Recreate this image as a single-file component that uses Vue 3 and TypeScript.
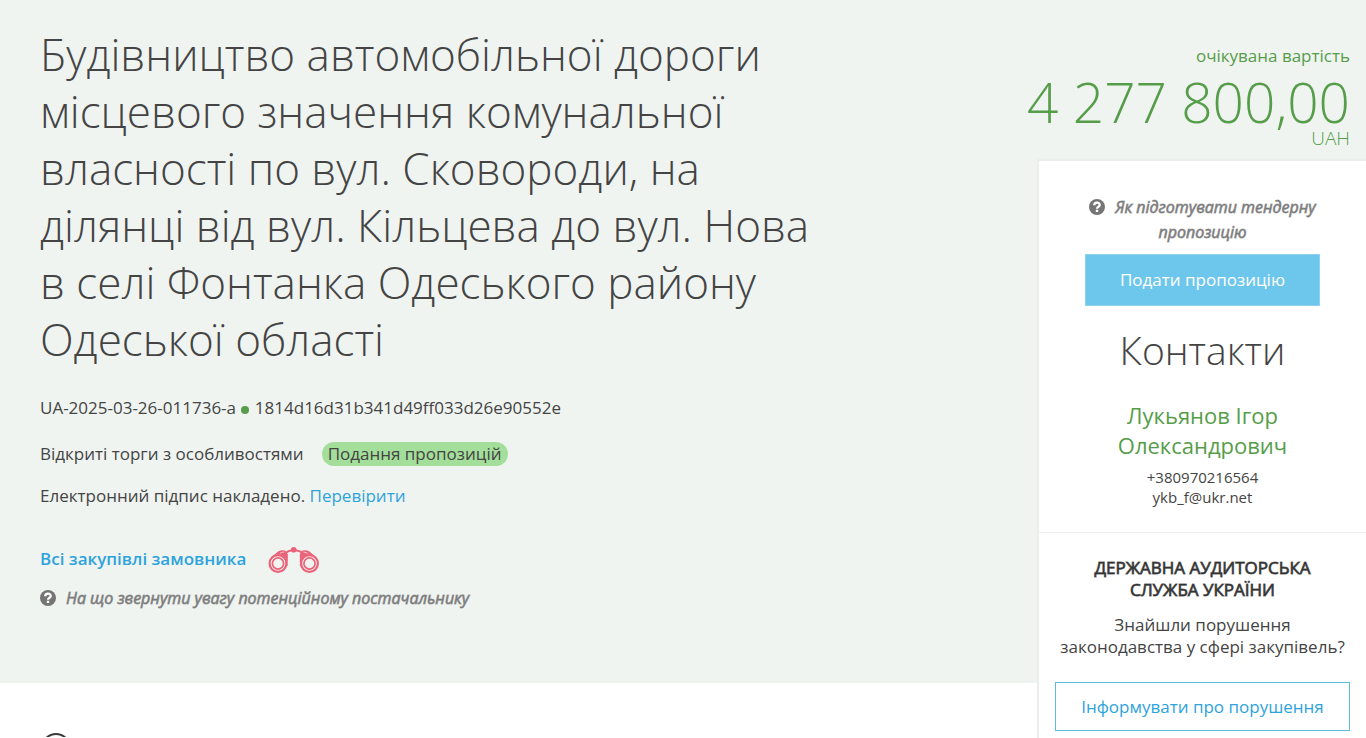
<script setup lang="ts">
const tender = {
  title:
    'Будівництво автомобільної дороги місцевого значення комунальної власності по вул. Сковороди, на ділянці від вул. Кільцева до вул. Нова в селі Фонтанка Одеського району Одеської області',
  id: 'UA-2025-03-26-011736-a',
  hash: '1814d16d31b341d49ff033d26e90552e',
  procedure: 'Відкриті торги з особливостями',
  status: 'Подання пропозицій',
  amount: '4 277 800,00',
  currency: 'UAH',
}

const contact = {
  name: 'Лукьянов Ігор Олександрович',
  phone: '+380970216564',
  email: 'ykb_f@ukr.net',
}
</script>

<template>
  <div class="page">
    <header class="hero">
      <h1 class="title">{{ tender.title }}</h1>
      <p class="ids">{{ tender.id }} <span class="dot"></span> {{ tender.hash }}</p>
      <p class="procedure">
        <span>{{ tender.procedure }}</span>
        <span class="status">{{ tender.status }}</span>
      </p>
      <p class="signature">Електронний підпис накладено. <a href="#signature">Перевірити</a></p>
      <p class="buyer">
        <a class="buyer-link" href="#buyer">Всі закупівлі замовника</a>
        <svg class="binoculars" viewBox="0 -1 52 28" aria-hidden="true">
          <g fill="none" stroke="#ea6479">
            <path d="M17 7.500Q20 4.500 25.500 4Q32 4.500 35 7.500" stroke-width="1.800" />
            <circle cx="10" cy="17.500" r="8.400" stroke-width="2.200" />
            <circle cx="10" cy="17.500" r="5.600" stroke-width="1.700" />
            <circle cx="41.500" cy="17.500" r="8.400" stroke-width="2.200" />
            <circle cx="41.500" cy="17.500" r="5.600" stroke-width="1.700" />
            <path d="M18.900 20V8M32.600 20V8" stroke-width="1.400" />
          </g>
          <path d="M2.500 12L10 5.500Q13 3.500 17 4.500L19.600 8V16Q16 8 10 8.500Q6 9 2.500 12Z" fill="#ea6479" />
          <path d="M49 12L41.500 5.500Q38.500 3.500 34.500 4.500L31.900 8V16Q35.500 8 41.500 8.500Q45.500 9 49 12Z" fill="#ea6479" />
          <path d="M12 7L16 6M39.500 7L35.500 6" stroke="#f6bfc8" />
          <circle cx="25.700" cy="3.800" r="2.800" fill="#ea6479" />
        </svg>
      </p>
      <a class="hint" href="#supplier-tips">
        <svg class="question" viewBox="0 0 16 16" aria-hidden="true">
          <circle cx="8" cy="8" r="8" fill="#757575" />
          <path d="M5.200 6.300C5.200 2.900 10.700 2.700 10.700 6C10.700 7.900 8 7.600 8 9.800" fill="none" stroke="#fff" stroke-width="2.300" />
          <path d="M6.800 10.700h2.400v2.300H6.800z" fill="#fff" />
        </svg>
        <em>На що звернути увагу потенційному постачальнику</em>
      </a>
    </header>

    <aside class="side">
      <div class="value">
        <span class="value-label">очікувана вартість</span>
        <span class="amount">{{ tender.amount }}</span>
        <span class="currency">{{ tender.currency }}</span>
      </div>
      <div class="card">
        <section class="contacts">
          <a class="guide" href="#guide">
            <svg class="question" viewBox="0 0 16 16" aria-hidden="true">
              <circle cx="8" cy="8" r="8" fill="#757575" />
              <path d="M5.200 6.300C5.200 2.900 10.700 2.700 10.700 6C10.700 7.900 8 7.600 8 9.800" fill="none" stroke="#fff" stroke-width="2.300" />
              <path d="M6.800 10.700h2.400v2.300H6.800z" fill="#fff" />
            </svg>
            <em>Як підготувати тендерну пропозицію</em>
          </a>
          <button class="submit" type="button">Подати пропозицію</button>
          <h2 class="contacts-title">Контакти</h2>
          <h3 class="person">{{ contact.name }}</h3>
          <p class="reach">{{ contact.phone }}<br />{{ contact.email }}</p>
        </section>
        <section class="audit">
          <h4 class="audit-title">ДЕРЖАВНА АУДИТОРСЬКА СЛУЖБА УКРАЇНИ</h4>
          <p class="audit-text">Знайшли порушення законодавства у сфері закупівель?</p>
          <button class="report" type="button">Інформувати про порушення</button>
        </section>
      </div>
    </aside>

    <main class="details">
      <svg class="section-mark" viewBox="0 0 30 30" aria-hidden="true">
        <circle cx="15" cy="15" r="14" fill="none" stroke="#3b3b3b" stroke-width="2" />
      </svg>
    </main>
  </div>
</template>

<style>
body {
  margin: 0;
  overflow: hidden;
  background: #fff;
}
</style>

<style scoped>
.page {
  display: grid;
  grid-template-columns: minmax(0, 1fr) 329px;
  grid-template-rows: auto 1fr;
  min-height: 100vh;
  font-family: "Open Sans", sans-serif;
  font-size: 17px;
  line-height: 24px;
  color: #444;
}
h1, h2, h3, h4, p {
  margin: 0;
  font-weight: 400;
}
a {
  color: #2ea3dc;
  text-decoration: none;
}
.hero {
  grid-column: 1 / -1;
  grid-row: 1;
  padding: 26px 369px 72px 40px;
  background: #f0f4f1;
}
.title {
  max-width: 780px;
  font-size: 44px;
  line-height: 57px;
  font-weight: 300;
}
.ids {
  margin-top: 28px;
}
.dot {
  display: inline-block;
  width: 8px;
  height: 8px;
  margin: 0 1px;
  border-radius: 50%;
  background: #569d4a;
}
.procedure {
  display: flex;
  gap: 18px;
  margin-top: 22px;
}
.status {
  padding: 0 6px;
  border-radius: 12px;
  background: #a3df9a;
}
.signature {
  margin-top: 18px;
}
.buyer {
  display: flex;
  align-items: center;
  gap: 22px;
  height: 28px;
  margin-top: 37px;
}
.buyer-link {
  font-weight: 600;
}
.binoculars {
  width: 52px;
  height: 28px;
}
.question {
  width: 16px;
  height: 16px;
  margin-right: 10px;
  vertical-align: -2px;
}
.hint {
  display: block;
  margin-top: 13px;
}
.hint,
.guide {
  font-size: 16px;
  line-height: 25px;
  color: #7b7b7b;
  -webkit-text-stroke: 1px rgba(123, 123, 123, 0.6);
}
.hint em,
.guide em {
  font-style: oblique 10deg;
}
.side {
  grid-column: 2;
  grid-row: 1 / 3;
  display: flex;
  flex-direction: column;
}
.value {
  display: flex;
  flex-direction: column;
  align-items: flex-end;
  box-sizing: border-box;
  height: 159px;
  padding: 44px 16px 0 0;
  color: #569d4a;
  white-space: nowrap;
}
.amount {
  font-size: 55px;
  line-height: 68px;
  font-weight: 300;
}
.currency {
  margin-top: -8px;
  font-size: 19px;
  line-height: 20px;
  font-weight: 300;
}
.card {
  flex: 1;
  border-left: 2px solid #ebeeec;
  border-top: 2px solid #ebeeec;
  background: #fff;
  text-align: center;
}
.contacts {
  padding: 34px 46px 25px;
  border-bottom: 1px solid #ececec;
}
.guide {
  display: block;
}
.submit {
  display: block;
  width: 100%;
  height: 52px;
  margin-top: 9px;
  border: 1px solid #8fd3ef;
  background: #6dc6eb;
  color: #fff;
  font: inherit;
}
.contacts-title {
  margin-top: 20px;
  font-size: 39px;
  line-height: 48px;
  font-weight: 300;
}
.person {
  margin-top: 26px;
  font-size: 22px;
  line-height: 30px;
  color: #569d4a;
}
.reach {
  margin-top: 7px;
  font-size: 15px;
  line-height: 20px;
}
.audit {
  padding: 24px 16px 8px;
  line-height: 22px;
}
.audit-title {
  padding: 0 30px;
  color: #333;
  -webkit-text-stroke: 1px rgba(51, 51, 51, 0.7);
}
.audit-text {
  margin-top: 13px;
}
.report {
  display: block;
  width: 100%;
  height: 49px;
  margin-top: 24px;
  border: 1px solid #5dbbe0;
  background: #fff;
  color: #2ea3dc;
  font: inherit;
}
.details {
  grid-column: 1;
  grid-row: 2;
  height: 54px;
  padding-left: 41px;
  overflow: hidden;
}
.section-mark {
  display: block;
  width: 30px;
  height: 30px;
  margin-top: 50px;
}
</style>
